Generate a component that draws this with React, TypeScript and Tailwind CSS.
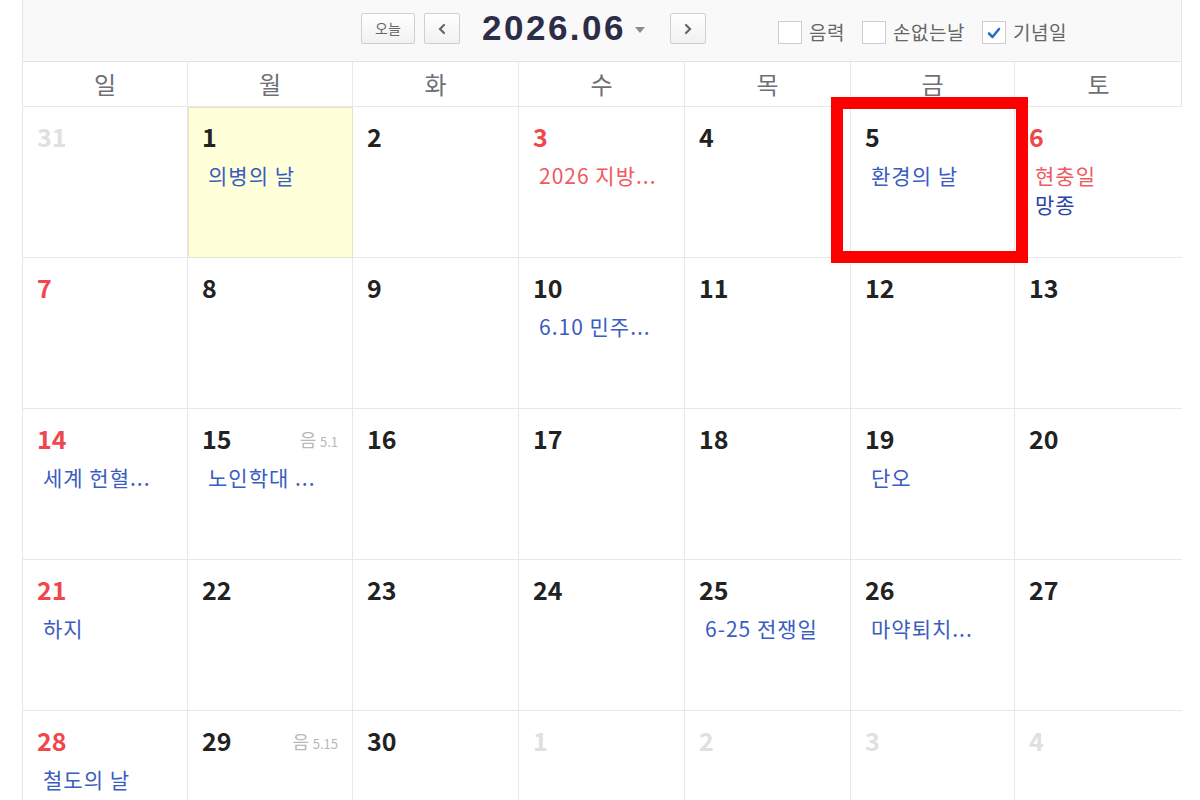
import React from "react";

type Ev = { text: string; tone?: "blue" | "red" | "navy" };
type Day = {
  n: number;
  muted?: boolean;
  red?: boolean;
  today?: boolean;
  lunar?: string;
  events?: Ev[];
};

const WEEKDAYS = ["일", "월", "화", "수", "목", "금", "토"];

const WEEKS: Day[][] = [
  [
    { n: 31, muted: true },
    { n: 1, today: true, events: [{ text: "의병의 날" }] },
    { n: 2 },
    { n: 3, red: true, events: [{ text: "2026 지방...", tone: "red" }] },
    { n: 4 },
    { n: 5, events: [{ text: "환경의 날" }] },
    {
      n: 6,
      red: true,
      events: [
        { text: "현충일", tone: "red" },
        { text: "망종", tone: "navy" },
      ],
    },
  ],
  [
    { n: 7, red: true },
    { n: 8 },
    { n: 9 },
    { n: 10, events: [{ text: "6.10 민주..." }] },
    { n: 11 },
    { n: 12 },
    { n: 13 },
  ],
  [
    { n: 14, red: true, events: [{ text: "세계 헌혈..." }] },
    { n: 15, lunar: "5.1", events: [{ text: "노인학대 ..." }] },
    { n: 16 },
    { n: 17 },
    { n: 18 },
    { n: 19, events: [{ text: "단오" }] },
    { n: 20 },
  ],
  [
    { n: 21, red: true, events: [{ text: "하지" }] },
    { n: 22 },
    { n: 23 },
    { n: 24 },
    { n: 25, events: [{ text: "6-25 전쟁일" }] },
    { n: 26, events: [{ text: "마약퇴치..." }] },
    { n: 27 },
  ],
  [
    { n: 28, red: true, events: [{ text: "철도의 날" }] },
    { n: 29, lunar: "5.15" },
    { n: 30 },
    { n: 1, muted: true },
    { n: 2, muted: true },
    { n: 3, muted: true },
    { n: 4, muted: true },
  ],
];

const COLS = "grid grid-cols-[165px_165px_166px_166px_166px_164px_167px]";

function NavButton({ children }: { children: React.ReactNode }) {
  return (
    <button
      type="button"
      className="flex h-[31px] items-center justify-center rounded-[2px] border border-[#cfcfcf] bg-gradient-to-b from-white to-[#f1f1f1] text-[#555]"
    >
      {children}
    </button>
  );
}

function Check({ label, checked }: { label: string; checked?: boolean }) {
  return (
    <label className="flex items-center gap-[7px] text-[19px] tracking-[0.5px] text-[#666]">
      <span className="flex h-[23px] w-[24px] items-center justify-center border border-[#cdcdcd] bg-white">
        {checked ? (
          <svg width="14" height="12" viewBox="0 0 14 12">
            <path
              d="M2 6.5 L5.5 10 L12 2"
              fill="none"
              stroke="#2f6fbf"
              strokeWidth="2.6"
              strokeLinecap="round"
              strokeLinejoin="round"
            />
          </svg>
        ) : null}
      </span>
      {label}
    </label>
  );
}

function DayCell({ day }: { day: Day }) {
  const numColor = day.muted
    ? "text-[#e0e0e0]"
    : day.red
      ? "text-[#f0474d]"
      : "text-[#222]";

  return (
    <div
      className={`h-[151px] border-b border-r border-[#e8e8e8] px-[14px] pt-[14px] last:border-r-0 ${
        day.today ? "bg-[#ffffd9] outline outline-1 -outline-offset-1 outline-[#e4e4c4]" : "bg-white"
      }`}
    >
      <div className="flex items-start justify-between">
        <span className={`text-[25px] font-bold leading-[30px] ${numColor}`}>
          {day.n}
        </span>
        {day.lunar ? (
          <span className="mt-[3px] text-[#b8b8b8]">
            <span className="text-[18px]">음</span>{" "}
            <span className="text-[13px]">{day.lunar}</span>
          </span>
        ) : null}
      </div>
      <div className="mt-[10px] pl-[6px]">
        {day.events?.map((ev) => (
          <div
            key={ev.text}
            className={`text-[21px] leading-[29px] tracking-[1px] ${
              ev.tone === "red"
                ? "text-[#f05a5f]"
                : ev.tone === "navy"
                  ? "text-[#2a47a6]"
                  : "text-[#3b5cc0]"
            }`}
          >
            {ev.text}
          </div>
        ))}
      </div>
    </div>
  );
}

export default function App() {
  return (
    <div
      className="relative h-[800px] w-[1200px] overflow-hidden bg-white"
      style={{ fontFamily: '"Noto Sans CJK KR", "Liberation Sans", sans-serif' }}
    >
      <div className="ml-[22px] w-[1160px] border-x border-[#e5e5e5]">
        <div className="flex h-[62px] items-center border-b border-[#e2e2e2] bg-[#f9f9f9] pl-[338px] pb-[4px]">
          <NavButton>
            <span className="w-[52px] text-center text-[14px] text-[#666]">오늘</span>
          </NavButton>
          <div className="ml-[9px]">
            <NavButton>
              <svg width="34" height="14" viewBox="0 0 34 14">
                <path
                  d="M19 3 L15 7 L19 11"
                  fill="none"
                  stroke="#666"
                  strokeWidth="2.2"
                  strokeLinecap="round"
                />
              </svg>
            </NavButton>
          </div>
          <span
            className="ml-[22px] text-[35px] font-bold tracking-[2.5px] text-[#2c2d48]"
            style={{ fontFamily: '"Liberation Sans", sans-serif' }}
          >
            2026.06
          </span>
          <svg width="12" height="8" viewBox="0 0 12 8" className="ml-[8px] mt-[2px]">
            <path d="M1 1 L11 1 L6 7 Z" fill="#8a8a8a" />
          </svg>
          <div className="ml-[24px]">
            <NavButton>
              <svg width="34" height="14" viewBox="0 0 34 14">
                <path
                  d="M15 3 L19 7 L15 11"
                  fill="none"
                  stroke="#666"
                  strokeWidth="2.2"
                  strokeLinecap="round"
                />
              </svg>
            </NavButton>
          </div>
          <div className="ml-[72px] mt-[8px] flex items-center gap-[17px]">
            <Check label="음력" />
            <Check label="손없는날" />
            <Check label="기념일" checked />
          </div>
        </div>

        <div className={`${COLS} h-[45px] border-b border-[#e8e8e8]`}>
          {WEEKDAYS.map((w) => (
            <div
              key={w}
              className="flex items-center justify-center border-r border-[#e8e8e8] text-[24px] text-[#6f6f78] last:border-r-0"
            >
              {w}
            </div>
          ))}
        </div>

        {WEEKS.map((week, i) => (
          <div key={i} className={COLS}>
            {week.map((day, j) => (
              <DayCell key={`${i}-${j}`} day={day} />
            ))}
          </div>
        ))}
      </div>

      <div className="absolute left-[831px] top-[97px] h-[166px] w-[197px] border-[12px] border-[#ff0000]" />
    </div>
  );
}
